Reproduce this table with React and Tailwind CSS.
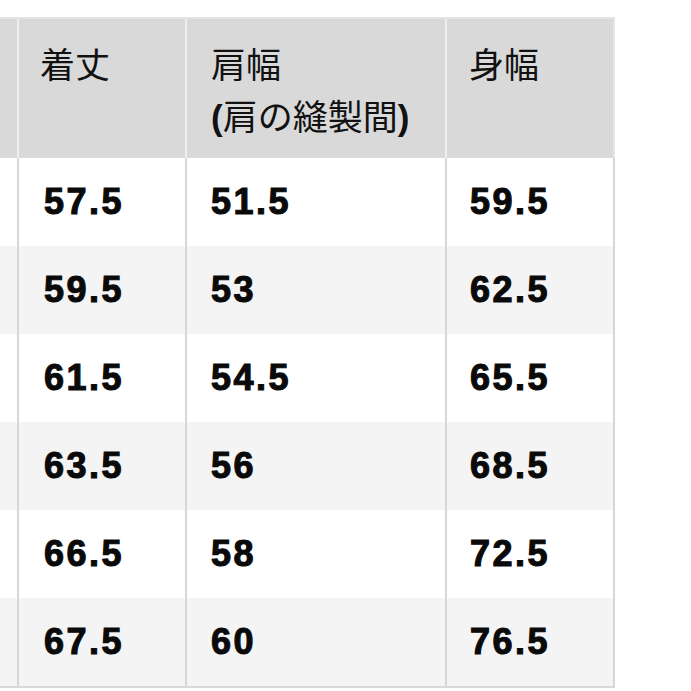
import React from "react";

const rows = [
  ["57.5", "51.5", "59.5"],
  ["59.5", "53", "62.5"],
  ["61.5", "54.5", "65.5"],
  ["63.5", "56", "68.5"],
  ["66.5", "58", "72.5"],
  ["67.5", "60", "76.5"],
];

const numCls =
  "flex items-center font-['Liberation_Sans',Arial,sans-serif] text-[36px] font-bold tracking-[2.5px] text-[#0a0a0a] [-webkit-text-stroke:1.1px_#0a0a0a]";

export default function App() {
  return (
    <div className="w-[691px] h-[691px] bg-white overflow-hidden pt-[17px]">
      <div className="w-[615px]">
        <div className="grid grid-cols-[17px_168px_260px_170px] h-[141px] bg-[#d9d9d9] border-t-2 border-[#e4e4e4] font-['Noto_Sans_CJK_JP','Noto_Sans',sans-serif] text-[35px] leading-[52px] text-[#111]">
          <div />
          <div className="border-l-2 border-[#efefef] pl-[21px] pt-[18px]">着丈</div>
          <div className="border-l-2 border-[#efefef] pl-[24px] pt-[18px] whitespace-nowrap">
            <div>肩幅</div>
            <div>
              <span className="font-['Liberation_Sans',Arial,sans-serif] font-bold">(</span>
              肩の縫製間
              <span className="font-['Liberation_Sans',Arial,sans-serif] font-bold">)</span>
            </div>
          </div>
          <div className="border-l-2 border-r-2 border-l-[#efefef] border-r-[#e6e6e6] pl-[22px] pt-[18px]">身幅</div>
        </div>
        <div className="border-b-2 border-[#d8d8d8]">
          {rows.map((r, i) => (
            <div
              key={i}
              className={
                i % 2 === 0
                  ? "grid grid-cols-[17px_168px_260px_170px] h-[88px] bg-white"
                  : "grid grid-cols-[17px_168px_260px_170px] h-[88px] bg-[#f4f4f4]"
              }
            >
              <div />
              <div className={"border-l-2 border-[#d6d6d6] pl-[25px] " + numCls}>{r[0]}</div>
              <div className={"border-l-2 border-[#d6d6d6] pl-[24px] " + numCls}>{r[1]}</div>
              <div className={"border-l-2 border-r-2 border-[#d6d6d6] pl-[23px] " + numCls}>{r[2]}</div>
            </div>
          ))}
        </div>
      </div>
    </div>
  );
}
